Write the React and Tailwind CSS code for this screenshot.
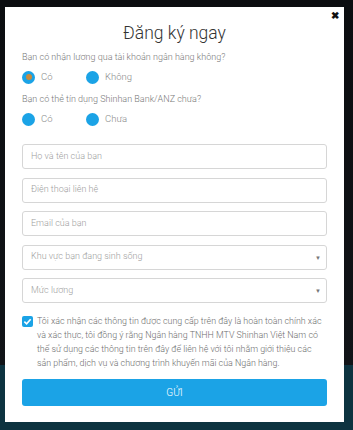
import React from "react";

function Radio({ checked, label, w }) {
  return (
    <label className={`flex items-center gap-[6px] ${w}`}>
      <span className="w-[13px] h-[13px] rounded-full bg-[#1ba3e6] flex items-center justify-center">
        {checked && <span className="w-[6px] h-[6px] rounded-full bg-[#c98a3c]" />}
      </span>
      <span className="text-[9.5px] font-light text-[#8a8a8a]">{label}</span>
    </label>
  );
}

function Field({ placeholder, select }) {
  return (
    <div className="h-[25px] border border-[#d6d6d6] rounded-[3px] flex items-center justify-between pl-[8px] pr-[5px]">
      <span className="text-[9px] font-light text-[#a0a0a0]">{placeholder}</span>
      {select && <span className="text-[6px] text-[#777]">▼</span>}
    </div>
  );
}

export default function App() {
  return (
    <div className="w-[353px] h-[430px] overflow-hidden bg-[linear-gradient(to_bottom,#0b0d10_0px,#111418_365px,#0d3340_365px,#0d3340_430px)] pt-[7px] pl-[5px] font-['Roboto',sans-serif]">
      <div className="relative w-[339px] h-[415px] bg-white px-[17px] pt-[14px]">
        <span className="absolute right-[5px] top-[1px] text-[10px] font-bold text-[#111]">✖</span>
        <h1 className="text-center text-[17.5px] leading-[24px] font-light text-[#333]">Đăng ký ngay</h1>
        <p className="mt-[5px] text-[9px] leading-[14px] font-light text-[#7a7a7a]">Bạn có nhận lương qua tài khoản ngân hàng không?</p>
        <div className="mt-[5px] h-[16px] flex items-center">
          <Radio checked label="Có" w="w-[64px]" />
          <Radio label="Không" />
        </div>
        <p className="mt-[7px] text-[9px] leading-[14px] font-light text-[#7a7a7a]">Bạn có thẻ tín dụng Shinhan Bank/ANZ chưa?</p>
        <div className="mt-[5px] h-[16px] flex items-center">
          <Radio label="Có" w="w-[64px]" />
          <Radio label="Chưa" />
        </div>
        <div className="mt-[17px] flex flex-col gap-[8.5px]">
          <Field placeholder="Họ và tên của bạn" />
          <Field placeholder="Điện thoại liên hệ" />
          <Field placeholder="Email của bạn" />
          <Field placeholder="Khu vực bạn đang sinh sống" select />
          <Field placeholder="Mức lương" select />
        </div>
        <div className="mt-[11px] flex gap-[4px]">
          <span className="mt-[2px] w-[11px] h-[11px] shrink-0 rounded-[2px] bg-[#1ba3e6] flex items-center justify-center">
            <svg width="9" height="9" viewBox="0 0 10 10"><path d="M1.5 5.2 L4 7.5 L8.5 2.5" stroke="white" strokeWidth="1.8" fill="none" /></svg>
          </span>
          <p className="text-[8.9px] leading-[14px] font-light text-[#6e6e6e]">
            Tôi xác nhận các thông tin được cung cấp trên đây là hoàn toàn chính xác và xác thực, tôi đồng ý rằng Ngân hàng TNHH MTV Shinhan Việt Nam có thể sử dụng các thông tin trên đây để liên hệ với tôi nhằm giới thiệu các sản phẩm, dịch vụ và chương trình khuyến mãi của Ngân hàng.
          </p>
        </div>
        <button className="mt-[9px] w-full h-[27px] rounded-[3px] bg-[#1ba3e6] text-white text-[10px] font-light">GỬI</button>
      </div>
    </div>
  );
}
